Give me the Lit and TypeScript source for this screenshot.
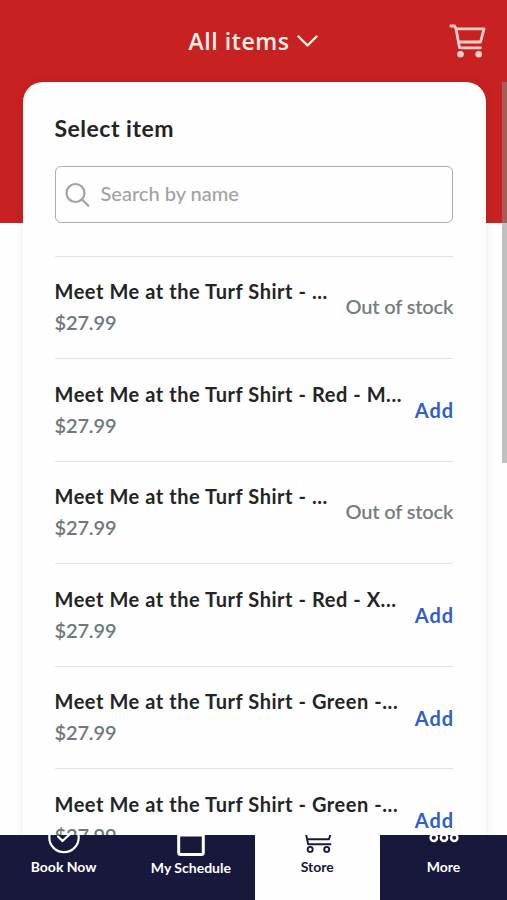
import { LitElement, html, css } from "lit";
import { customElement } from "lit/decorators.js";

interface Item { name: string; price: string; stock: boolean; }

const ITEMS: Item[] = [
  { name: "Meet Me at the Turf Shirt - ...", price: "$27.99", stock: false },
  { name: "Meet Me at the Turf Shirt - Red - M...", price: "$27.99", stock: true },
  { name: "Meet Me at the Turf Shirt - ...", price: "$27.99", stock: false },
  { name: "Meet Me at the Turf Shirt - Red - X...", price: "$27.99", stock: true },
  { name: "Meet Me at the Turf Shirt - Green -...", price: "$27.99", stock: true },
  { name: "Meet Me at the Turf Shirt - Green -...", price: "$27.99", stock: true },
];

@customElement("app-root")
export class AppRoot extends LitElement {
  static styles = css`
    :host {
      display: block;
      position: relative;
      width: 507px;
      height: 900px;
      overflow: hidden;
      background: #fefefe;
      font-family: "Lato", "Open Sans", sans-serif;
      color: #232425;
    }
    * { box-sizing: border-box; }
    .page {
      height: 835px;
      overflow: hidden;
      background: linear-gradient(#c82121 0 223px, #fefefe 223px);
    }
    .header {
      height: 81.5px;
      display: grid;
      grid-template-columns: 1fr auto 1fr;
      align-items: center;
      color: #fff0ea;
    }
    .filter {
      grid-column: 2;
      display: flex;
      align-items: center;
      gap: 8px;
      white-space: nowrap;
      font: 600 23px/30px "Open Sans", sans-serif;
      letter-spacing: 0.55px;
    }
    .cart { justify-self: end; margin-right: 20px; }
    svg { display: block; fill: none; stroke: currentColor; flex: none; }
    .dot { fill: #ffd0ca; stroke: none; }
    .card {
      margin: 0 21.5px 0 22.5px;
      height: 900px;
      padding: 30.5px 32.5px 0 32px;
      border-radius: 20px 20px 0 0;
      background: #fefefe;
      box-shadow: 0 0 12px rgba(30, 30, 60, 0.07);
    }
    h1 { margin: 0; font-size: 23px; line-height: 32px; font-weight: 700; letter-spacing: 0.5px; }
    .search {
      display: flex;
      align-items: center;
      gap: 10px;
      height: 57px;
      margin-top: 22px;
      padding-left: 9px;
      border: 1.5px solid #a9aeae;
      border-radius: 6px;
      color: #9ea3a5;
      font-size: 20px;
      line-height: 24px;
      font-weight: 500;
    }
    .search span { padding-bottom: 3px; }
    .list { margin-top: 32.5px; }
    .row {
      display: flex;
      align-items: center;
      justify-content: space-between;
      height: 102.5px;
      border-top: 1.5px solid #e3e4e5;
      white-space: nowrap;
      font-size: 20px;
      line-height: 31px;
      font-weight: 600;
    }
    .name { font-weight: 700; letter-spacing: 0.55px; }
    .price { color: #6d797d; letter-spacing: -0.15px; }
    .status { color: #737e80; letter-spacing: -0.18px; margin-right: -0.18px; padding-bottom: 1.5px; }
    .add { color: #305fc8; font-weight: 700; letter-spacing: 0.9px; margin-right: -0.9px; padding-top: 1.5px; }
    .scroll {
      position: absolute;
      right: 0;
      top: 82px;
      width: 5.5px;
      height: 381px;
      background: rgba(140, 140, 140, 0.55);
    }
    .nav {
      display: grid;
      grid-template-columns: 254.5px 125.5px 127px;
      height: 65px;
      background: #18183c;
      color: #fff;
      font-size: 14px;
      font-weight: 700;
      line-height: 18px;
    }
    .pair { display: grid; grid-template-columns: 1fr 1fr; }
    .tab {
      display: flex;
      flex-direction: column;
      align-items: center;
      gap: 3px;
      overflow: hidden;
      white-space: nowrap;
    }
    .low svg { height: 22px; }
    .low { gap: 2px; }
    .active { background: #fefefe; color: #18183c; }
  `;

  private row(i: Item) {
    return html`<div class="row">
      <div><div class="name">${i.name}</div><div class="price">${i.price}</div></div>
      ${i.stock ? html`<div class="add">Add</div>` : html`<div class="status">Out of stock</div>`}
    </div>`;
  }

  render() {
    return html`
      <div class="page">
        <div class="header">
          <div class="filter"><span>All items</span>
            <svg width="21" height="14" viewBox="0 0 21 14" stroke-width="2.4" stroke-linecap="round" stroke-linejoin="round"><path d="M1.5 2.5 10.5 11.5 19.5 2.5"/></svg>
          </div>
          <svg class="cart" width="38" height="36" viewBox="0 0 38 36" stroke-width="2.8" stroke-linecap="round" stroke-linejoin="round">
            <g stroke="#ffd0ca"><path d="M1.8 3H5.5L7 5.8 10.5 24.8H31.5M7 5.8H35L31.5 19H9.5"/></g>
            <circle class="dot" cx="11.5" cy="31.3" r="3.3"/><circle class="dot" cx="29.7" cy="31.3" r="3.3"/>
          </svg>
        </div>
        <div class="card">
          <h1>Select item</h1>
          <div class="search">
            <svg width="26" height="26" viewBox="0 0 26 26" stroke-width="2.2" stroke-linecap="round"><circle cx="10.5" cy="11" r="9"/><path d="m17.3 17.8 6 6"/></svg>
            <span>Search by name</span>
          </div>
          <div class="list">${ITEMS.map((i) => this.row(i))}</div>
        </div>
      </div>
      <div class="scroll"></div>
      <div class="nav">
        <div class="pair">
          <div class="tab"><svg width="34" height="20" viewBox="0 0 34 20" stroke-width="2.2" stroke-linecap="round" stroke-linejoin="round"><circle cx="17" cy="2.5" r="14.7"/><path d="M11 1.5 15.5 6 23 -1"/></svg>Book Now</div>
          <div class="tab low"><svg width="34" height="22" viewBox="0 0 34 22" stroke-width="3"><rect x="4.7" y="-8" width="24.6" height="27.500" rx="2"/><path d="M5 0H29"/></svg>My Schedule</div>
        </div>
        <div class="tab active"><svg width="34" height="20" viewBox="0 0 34 20" stroke-width="1.9" stroke-linecap="round" stroke-linejoin="round"><path d="M5.800 -2 8.200 9.200H30.500M7.200 4.300H29L30.800 -2"/><circle cx="10.200" cy="14.400" r="2.500"/><circle cx="26.700" cy="14.400" r="2.500"/></svg>Store</div>
        <div class="tab"><svg width="34" height="20" viewBox="0 0 34 20" stroke-width="2.4"><circle cx="6.8" cy="2.8" r="3.2"/><circle cx="17" cy="2.8" r="3.2"/><circle cx="27.2" cy="2.8" r="3.2"/></svg>More</div>
      </div>`;
  }
}
